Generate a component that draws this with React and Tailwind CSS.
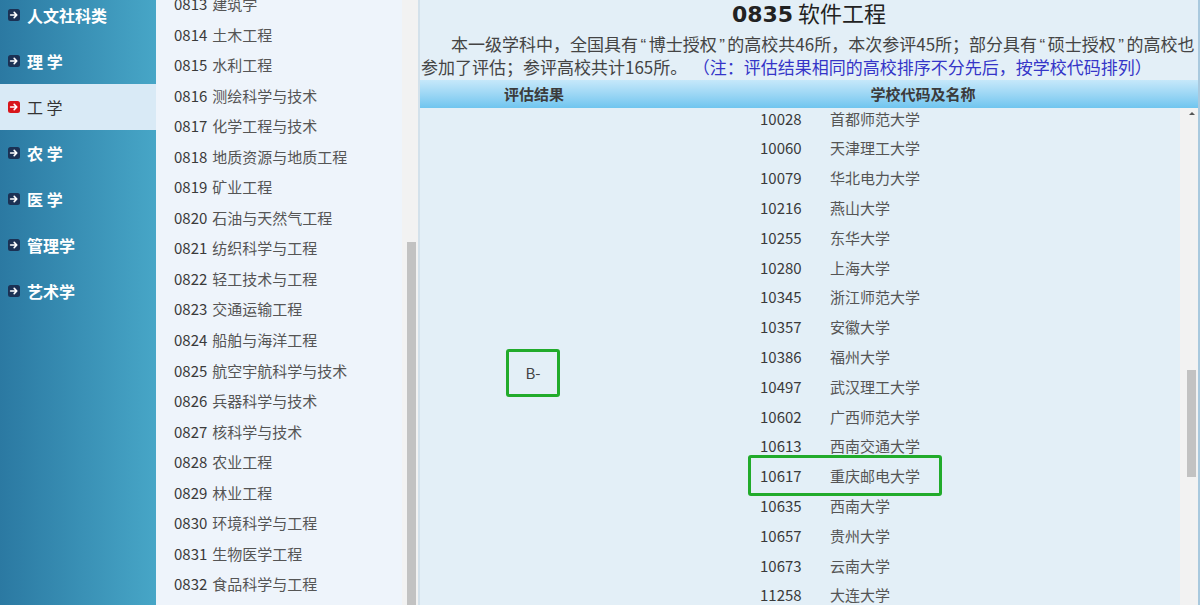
const cats = [
  { name: '人文社科类' },
  { name: '理 学' },
  { name: '工 学', active: true },
  { name: '农 学' },
  { name: '医 学' },
  { name: '管理学' },
  { name: '艺术学' },
];

const subjects = [
  ['0813', '建筑学'],
  ['0814', '土木工程'],
  ['0815', '水利工程'],
  ['0816', '测绘科学与技术'],
  ['0817', '化学工程与技术'],
  ['0818', '地质资源与地质工程'],
  ['0819', '矿业工程'],
  ['0820', '石油与天然气工程'],
  ['0821', '纺织科学与工程'],
  ['0822', '轻工技术与工程'],
  ['0823', '交通运输工程'],
  ['0824', '船舶与海洋工程'],
  ['0825', '航空宇航科学与技术'],
  ['0826', '兵器科学与技术'],
  ['0827', '核科学与技术'],
  ['0828', '农业工程'],
  ['0829', '林业工程'],
  ['0830', '环境科学与工程'],
  ['0831', '生物医学工程'],
  ['0832', '食品科学与工程'],
  ['0833', '城乡规划学'],
];

const schools = [
  ['10028', '首都师范大学'],
  ['10060', '天津理工大学'],
  ['10079', '华北电力大学'],
  ['10216', '燕山大学'],
  ['10255', '东华大学'],
  ['10280', '上海大学'],
  ['10345', '浙江师范大学'],
  ['10357', '安徽大学'],
  ['10386', '福州大学'],
  ['10497', '武汉理工大学'],
  ['10602', '广西师范大学'],
  ['10613', '西南交通大学'],
  ['10617', '重庆邮电大学', true],
  ['10635', '西南大学'],
  ['10657', '贵州大学'],
  ['10673', '云南大学'],
  ['11258', '大连大学'],
];

const cjk = { fontFamily: '"Noto Sans CJK SC", "Liberation Sans", sans-serif' };
const latin = { fontFamily: '"Liberation Sans", sans-serif' };

function ArrowBox({ red }) {
  return (
    <svg width="12" height="12" viewBox="0 0 12 12" className="shrink-0">
      <rect x="0" y="0" width="12" height="12" rx="2.5" fill={red ? '#d8161b' : '#1b3154'} />
      <path d="M2.6 6h6M6.2 3.4 8.8 6 6.2 8.6" stroke="#fff" strokeWidth="1.6" fill="none" strokeLinecap="round" strokeLinejoin="round" />
    </svg>
  );
}

function Q({ children }) {
  return (
    <span className="mx-[2.5px]" style={latin}>
      {children}
    </span>
  );
}

function Sidebar() {
  return (
    <aside className="w-[156px] shrink-0 bg-gradient-to-r from-[#2b79a2] to-[#47a6c7]">
      <div className="-mt-[8px]">
        {cats.map((c) => (
          <div
            key={c.name}
            className={`h-[46px] flex items-center gap-[7px] pl-[8px] text-[16px] whitespace-pre ${
              c.active ? 'bg-[#d9eaf6] text-[#333]' : 'text-white font-bold'
            }`}
          >
            <ArrowBox red={c.active} />
            <span>{c.name}</span>
          </div>
        ))}
      </div>
    </aside>
  );
}

function SubjectList() {
  return (
    <div className="w-[246px] shrink-0 bg-[#eef4fb] overflow-hidden">
      <div className="-mt-[11px]">
        {subjects.map(([code, name]) => (
          <div key={code} className="h-[30.55px] flex items-center pl-[18px] text-[15px] text-[#555] whitespace-nowrap">
            <span className="text-[#3a3a3a] mr-[5px]">{code}</span>
            <span>{name}</span>
          </div>
        ))}
      </div>
    </div>
  );
}

function Scrollbar({ top, height, arrow, className }) {
  return (
    <div className={`relative shrink-0 bg-[#f2f2f2] ${className}`}>
      {arrow && (
        <div className="absolute right-[3px] top-[4px] w-0 h-0 border-l-[3px] border-r-[3px] border-b-[3px] border-l-transparent border-r-transparent border-b-[#555]" />
      )}
      <div className="absolute right-[2px] w-[9px] bg-[#c2c2c2]" style={{ top, height }} />
    </div>
  );
}

export default function App() {
  return (
    <div className="flex h-[605px] w-[1200px] overflow-hidden bg-[#e3eff7]" style={cjk}>
      <Sidebar />
      <SubjectList />
      <Scrollbar top={242} height={400} className="w-[18px] border-r-2 border-[#d3e1eb]" />

      <main className="flex-1 flex flex-col min-w-0 border-r-2 border-[#a9c9de]">
        <h1 className="h-[33px] shrink-0 -mt-[1px] text-center text-[22px] leading-[26px] text-[#222]">
          <span className="font-bold" style={{ fontFamily: '"DejaVu Sans", sans-serif' }}>0835</span> 软件工程
        </h1>
        <div className="h-[46px] shrink-0 text-[17px] leading-[23px] text-[#444] whitespace-nowrap overflow-hidden">
          <div className="h-[23px] pl-[31px]">
            本一级学科中，全国具有<Q>“</Q>博士授权<Q>”</Q>的高校共46所，本次参评45所；部分具有<Q>“</Q>硕士授权<Q>”</Q>的高校也
          </div>
          <div className="h-[23px] pl-[1px]">
            参加了评估；参评高校共计165所。
            <span className="ml-[14px] text-[#3535c8]">（注：评估结果相同的高校排序不分先后，按学校代码排列）</span>
          </div>
        </div>

        <div className="mt-[2px] h-[28px] shrink-0 flex items-center bg-gradient-to-b from-[#c6e8fa] to-[#6fc5ef] text-[15px] font-bold text-[#3b3b3b]">
          <div className="w-[228px] text-center">评估结果</div>
          <div className="flex-1 text-center">学校代码及名称</div>
        </div>

        <div className="flex-1 flex min-h-0 overflow-hidden">
          <div className="w-[228px] shrink-0">
            <div className="mt-[241px] ml-[86px] w-[54px] h-[48px] border-[3px] border-[#21ab2b] rounded-[3px] flex items-center justify-center text-[15px] text-[#444]">
              B-
            </div>
          </div>
          <div className="flex-1 min-w-0">
            <div className="-mt-[4px]">
              {schools.map(([code, name, hit]) => (
                <div key={code} className="h-[29.8px] flex items-center pl-[112px] text-[15px] whitespace-nowrap">
                  <div className="relative flex items-center">
                    <span className="w-[70px] text-[#3a3a3a]">{code}</span>
                    <span className="text-[#555]">{name}</span>
                    {hit && (
                      <div className="absolute -left-[12px] -top-[10px] w-[194px] h-[41px] border-[3px] border-[#21ab2b] rounded-[3px]" />
                    )}
                  </div>
                </div>
              ))}
            </div>
          </div>
          <Scrollbar top={262} height={107} arrow className="w-[18px]" />
        </div>
      </main>
    </div>
  );
}
